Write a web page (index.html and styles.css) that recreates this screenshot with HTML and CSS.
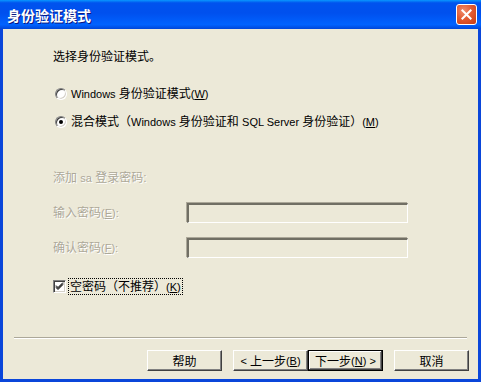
FILE: index.html
```html
<!DOCTYPE html>
<html>

<head>
    <meta charset="UTF-8">
    <title>身份验证模式</title>
    <link rel="stylesheet" href="styles.css">
</head>

<body>
    <div class="window">
        <div class="titlebar">
            <span class="title">身份验证模式</span>
            <span class="close-btn">
                <svg viewBox="0 0 21 21" width="21" height="21">
                    <path d="M6 6l9 9M15 6l-9 9" stroke="#fff" stroke-width="2.2" stroke-linecap="square" />
                </svg>
            </span>
        </div>

        <div class="frame">
            <div class="content">
                <p class="intro">选择身份验证模式。</p>

                <label class="option">
                    <span class="radio"></span>
                    <span><span class="en">Windows </span>身份验证模式<span class="en">(<u>W</u>)</span></span>
                </label>
                <label class="option">
                    <span class="radio checked"></span>
                    <span>混合模式（<span class="en">Windows </span>身份验证和 <span class="en">SQL Server </span>身份验证）<span class="en">(<u>M</u>)</span></span>
                </label>

                <p class="group-label disabled">添加 <span class="en">sa</span> 登录密码:</p>

                <div class="field-grid">
                    <span class="disabled">输入密码<span class="en">(<u>E</u>):</span></span>
                    <span class="textbox"></span>
                    <span class="disabled">确认密码<span class="en">(<u>F</u>):</span></span>
                    <span class="textbox"></span>
                </div>

                <label class="check-row">
                    <span class="checkbox">
                        <svg viewBox="0 0 9 9" width="9" height="9">
                            <path d="M1 3.5l2 2 5-5M1 4.5l2 2 5-5M1 5.5l2 2 5-5" stroke="#000" stroke-width="1" fill="none" />
                        </svg>
                    </span>
                    <span class="focus">空密码（不推荐）<span class="en">(<u>K</u>)</span></span>
                </label>
            </div>

            <div class="separator"></div>

            <div class="buttons">
                <span class="btn gap-after">帮助</span>
                <span class="btn"><span class="en">&lt;&nbsp;</span>上一步<span class="en">(<u>B</u>)</span></span>
                <span class="btn default gap-after">下一步<span class="en">(<u>N</u>)&nbsp;&gt;</span></span>
                <span class="btn">取消</span>
            </div>
        </div>
    </div>
</body>

</html>
```

FILE: styles.css
```css
:root {
    --face: #ECE9D8;
    --shadow: #ACA899;
    --dark-shadow: #716F64;
    --highlight: #FFFFFF;
    --frame-blue: #0A46DA;
    --disabled-text: #ACA899;
}

* {
    box-sizing: border-box;
}

body {
    margin: 0;
    font-family: "Liberation Sans", "Noto Sans CJK SC", sans-serif;
    font-size: 12px;
    color: #000;
}

.en {
    font-size: 11px;
}

.window {
    width: 481px;
    height: 382px;
    display: flex;
    flex-direction: column;
}

/* Barre de titre */
.titlebar {
    height: 29px;
    display: flex;
    align-items: center;
    justify-content: space-between;
    padding: 0 4px 0 7px;
    background: linear-gradient(to bottom, #0997FF 0%, #0053EE 10%, #0050EE 45%, #0063FF 85%, #0046D8 100%);
}

.title {
    color: #fff;
    font-family: "Noto Sans CJK SC", sans-serif;
    font-weight: bold;
    font-size: 14px;
    line-height: 16px;
    text-shadow: 1px 1px #0A1883;
}

.close-btn {
    width: 21px;
    height: 21px;
    border: 1px solid #fff;
    border-radius: 3px;
    background: radial-gradient(circle at 35% 30%, #F08D6E 0%, #E25B33 45%, #C63A10 100%);
    display: flex;
    align-items: center;
    justify-content: center;
}

.close-btn svg {
    width: 19px;
    height: 19px;
}

/* Cadre */
.frame {
    flex: 1;
    display: flex;
    flex-direction: column;
    background: var(--face);
    border: 3px solid var(--frame-blue);
    border-top: 0;
}

.content {
    flex: 1;
    padding: 21px 0 0 50px;
    line-height: 14px;
}

.intro {
    margin: 0;
}

.option {
    display: flex;
    align-items: center;
    height: 14px;
    margin-top: 14px;
}

.intro + .option {
    margin-top: 23px;
}

.radio {
    width: 12px;
    height: 12px;
    margin: 0 4px 0 2px;
    border-radius: 50%;
    background: #fff;
    border: 1px solid;
    border-color: #808080 #fff #fff #808080;
    box-shadow: inset 1px 1px #404040, inset -1px -1px #D4D0C8;
    display: flex;
    align-items: center;
    justify-content: center;
}

.radio.checked::after {
    content: "";
    width: 4px;
    height: 4px;
    border-radius: 50%;
    background: #000;
}

.disabled {
    color: var(--disabled-text);
    text-shadow: 1px 1px #fff;
}

.group-label {
    margin: 42px 0 0;
}

.field-grid {
    display: grid;
    grid-template-columns: 134px 221px;
    grid-auto-rows: 20px;
    row-gap: 15px;
    align-items: center;
    margin-top: 18px;
}

.textbox {
    height: 20px;
    background: var(--face);
    border-style: solid;
    border-width: 2px 1px 1px 2px;
    border-color: var(--dark-shadow) var(--highlight) var(--highlight) var(--dark-shadow);
    box-shadow: -1px -1px 0 var(--shadow);
}

.check-row {
    display: flex;
    align-items: center;
    margin-top: 21px;
}

.checkbox {
    width: 13px;
    height: 13px;
    background: #fff;
    border: 1px solid;
    border-color: #808080 #fff #fff #808080;
    box-shadow: inset 1px 1px #404040, inset -1px -1px #D4D0C8;
    display: flex;
    align-items: center;
    justify-content: center;
    margin-right: 3px;
}

.focus {
    outline: 1px dotted #000;
    padding: 1px 1px 0;
}

/* Séparateur et boutons */
.separator {
    height: 2px;
    margin: 0 11px;
    border-top: 1px solid var(--shadow);
    border-bottom: 1px solid var(--highlight);
}

.buttons {
    display: flex;
    justify-content: flex-end;
    padding: 11px 9px 8px;
}

.btn {
    width: 75px;
    height: 21px;
    display: flex;
    align-items: center;
    justify-content: center;
    background: var(--face);
    border: 1px solid;
    border-color: #fff #404040 #404040 #fff;
    box-shadow: inset -1px -1px #808080;
}

.btn.default {
    outline: 1px solid #000;
    outline-offset: -1px;
    box-shadow: inset -1px -1px #404040, inset 1px 1px #fff, inset -2px -2px #808080;
}

.gap-after {
    margin-right: 11px;
}
```
